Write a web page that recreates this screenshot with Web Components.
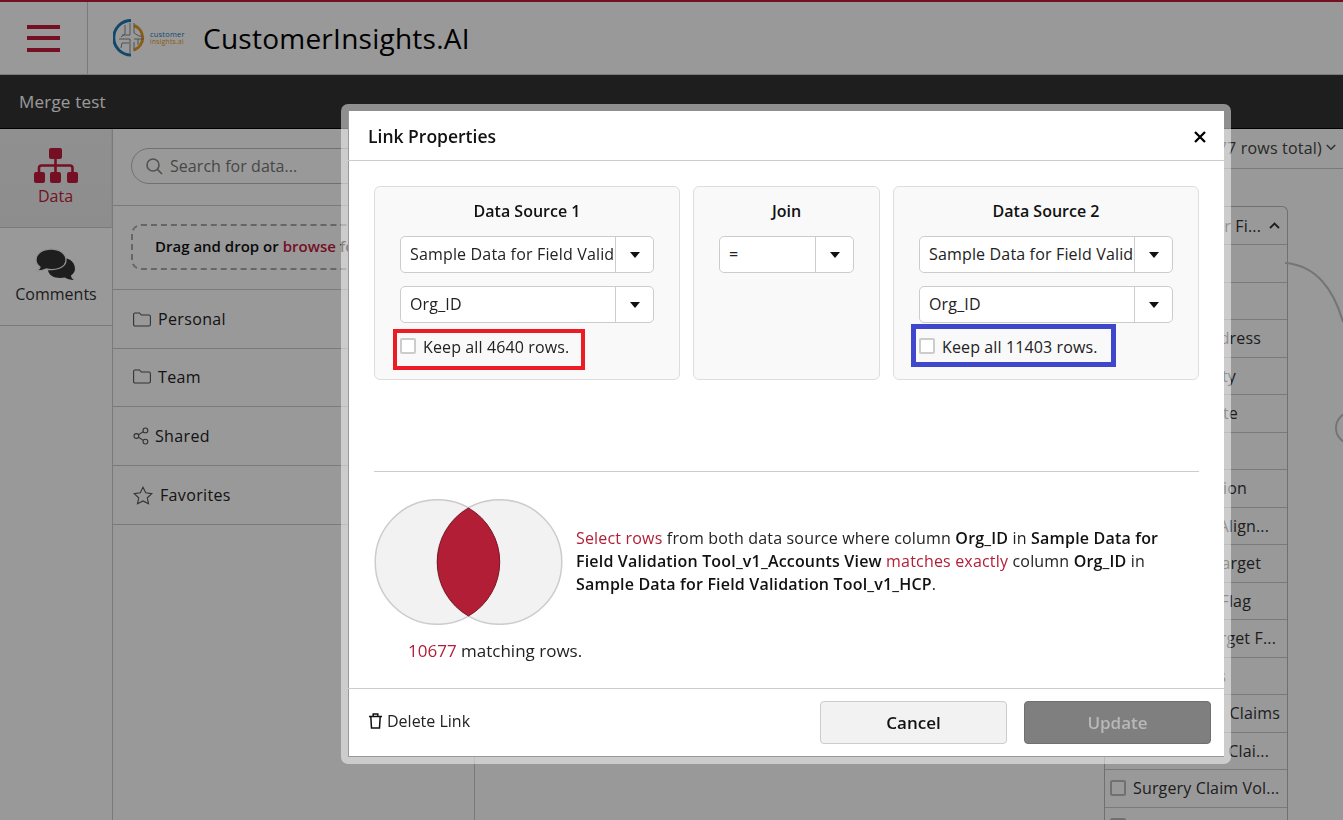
<!DOCTYPE html>
<html>
<head>
<meta charset="utf-8">
<title>Link Properties</title>
<style>
  html, body { margin:0; height:100%; overflow:hidden; }
  body { font-family:"Open Sans", sans-serif; color:#000; background:#fff; }
  .shell { height:820px; display:flex; flex-direction:column; }
  .work { flex:1; display:flex; min-height:0; }
  b { font-weight:600; }
</style>
</head>
<body>
<div class="shell">
  <app-header>CustomerInsights.AI</app-header>
  <title-bar>Merge test</title-bar>
  <div class="work">
    <side-rail></side-rail>
    <data-panel></data-panel>
    <link-canvas></link-canvas>
  </div>
</div>
<link-dialog></link-dialog>

<script>
const RED = '#c41a3c';

class AppHeader extends HTMLElement {
  constructor() {
    super();
    this.attachShadow({ mode: 'open' });
    this.shadowRoot.innerHTML = `
      <style>
        :host { display:flex; height:75px; box-sizing:border-box; border-top:2px solid ${RED}; border-bottom:1px solid #ccc; background:#fff; align-items:stretch; }
        .burger { width:88px; box-sizing:border-box; border-right:1px solid #ccc; display:flex; flex-direction:column; justify-content:center; gap:7.5px; padding:0 27px; }
        .burger i { display:block; height:4px; background:${RED}; }
        .brand { display:flex; align-items:center; padding-left:25px; gap:16px; }
        h1 { margin:0; font-size:28px; font-weight:500; letter-spacing:.25px; color:#000; }
        svg { display:block; }
      </style>
      <div class="burger"><i></i><i></i><i></i></div>
      <div class="brand">
        <svg width="74" height="40" viewBox="0 0 74 40">
          <path d="M18 2.500A17 17 0 0 0 18 37" fill="none" stroke="#1f78b4" stroke-width="3"/>
          <path d="M21 7.500A13 13 0 0 1 21 32" fill="none" stroke="#e89a1e" stroke-width="3"/>
          <g fill="none" stroke="#888" stroke-width="1">
            <path d="M12 7V16L8 19M17 5V17H9M17 21H6M16 25H9L8 30M17 21V35"/>
            <path d="M21 5V15L26 18H30M21 24V33M21 21H31M25 21V27"/>
          </g>
          <text x="37" y="18.500" font-family="Open Sans" font-size="7.400" fill="#1f78b4" letter-spacing=".25">customer</text>
          <text x="37" y="25.500" font-family="Open Sans" font-size="6.800" fill="#e89a1e" letter-spacing=".2">insights.ai</text>
        </svg>
        <h1><slot></slot></h1>
      </div>`;
  }
}
customElements.define('app-header', AppHeader);

class TitleBar extends HTMLElement {
  constructor() {
    super();
    this.attachShadow({ mode: 'open' });
    this.shadowRoot.innerHTML = `
      <style>
        :host { display:flex; align-items:center; height:54px; box-sizing:border-box; background:#333; border-bottom:1px solid #000; padding-left:19px; color:#fff; font-size:17px; letter-spacing:.2px; }
      </style>
      <slot></slot>`;
  }
}
customElements.define('title-bar', TitleBar);

class SideRail extends HTMLElement {
  constructor() {
    super();
    this.attachShadow({ mode: 'open' });
    this.shadowRoot.innerHTML = `
      <style>
        :host { display:block; width:113px; box-sizing:border-box; border-right:1px solid #ccc; background:#fff; flex:none; }
        .tab { height:98px; box-sizing:border-box; border-bottom:1px solid #ccc; display:flex; flex-direction:column; align-items:center; font-size:16px; color:#333; padding-top:19px; }
        .tab.on { height:99px; background:linear-gradient(#f0f0f0,#ececec); color:${RED}; border-right:1px solid #e4e4e4; }
        svg { display:block; }
        span { line-height:22px; }
      </style>
      <div class="tab on">
        <svg width="46" height="36" viewBox="0 0 46 36">
          <g fill="${RED}">
            <rect x="16" y="0" width="13" height="11" rx="2"/>
            <rect x="1" y="24" width="11" height="11" rx="2"/>
            <rect x="17" y="24" width="11" height="11" rx="2"/>
            <rect x="34" y="24" width="11" height="11" rx="2"/>
          </g>
          <path d="M22.500 11V24M6 24V20Q6 17.500 8.500 17.500H37Q39.500 17.500 39.500 20V24" fill="none" stroke="${RED}" stroke-width="2.600"/>
        </svg>
        <span style="margin-top:1px">Data</span>
      </div>
      <div class="tab" style="padding-top:20px">
        <svg width="42" height="33" viewBox="0 0 42 33">
          <path d="M16 10C27 8 40 10 40 21C40 24 38 26 36 27.500C36 29 37 31 39 32C35 32 32 31 30 29.500C22 31 14 29 13 22Z" fill="#333"/>
          <path d="M16 1C8 1 1 5 1 12C1 15 3 17.500 5 19C5 20.500 3 22 1 23C5 23 8 22.500 11 21C20 23 31 20 31 12C31 5 24 1 16 1Z" fill="#333" stroke="#f4f4f4" stroke-width="1.300"/>
        </svg>
        <span style="margin-top:2px">Comments</span>
      </div>`;
  }
}
customElements.define('side-rail', SideRail);

class PanelRow extends HTMLElement {
  constructor() {
    super();
    this.attachShadow({ mode: 'open' });
    this.shadowRoot.innerHTML = `
      <style>
        :host { display:flex; align-items:center; height:59px; box-sizing:border-box; border-bottom:1px solid #ccc; padding-left:20px; font-size:16px; font-weight:500; letter-spacing:.35px; color:#222; }
        ::slotted(svg) { display:block; margin-right:var(--gap, 7px); fill:none; stroke:#555; stroke-width:1.100; }
      </style>
      <slot></slot>`;
  }
}
customElements.define('panel-row', PanelRow);

class DataPanel extends HTMLElement {
  constructor() {
    super();
    this.attachShadow({ mode: 'open' });
    this.shadowRoot.innerHTML = `
      <style>
        :host { display:block; width:362px; box-sizing:border-box; border-right:1px solid #ccc; background:#fff; flex:none; }
        .search { height:77px; box-sizing:border-box; border-bottom:1px solid #ccc; padding:19px 0 0 18px; }
        .pill { height:36px; width:320px; box-sizing:border-box; border:1px solid #bbb; border-radius:18px; display:flex; align-items:center; gap:7px; padding-left:14px; font-size:16px; color:#777; letter-spacing:.05px; }
        .drop-row { height:84px; box-sizing:border-box; border-bottom:1px solid #ccc; padding:18px 0 0 18px; }
        .drop { height:46px; width:320px; box-sizing:border-box; border:2px dashed #aaa; border-radius:10px; display:flex; align-items:center; padding:0 0 2px 22px; font-size:15px; font-weight:600; white-space:nowrap; color:#111; overflow:hidden; }
        .drop em { font-style:normal; color:${RED}; margin:0 4px; }
        svg { display:block; }
      </style>
      <div class="search">
        <div class="pill">
          <svg width="17" height="17" viewBox="0 0 17 17" fill="none" stroke="#888" stroke-width="1.600"><circle cx="7" cy="7" r="6"/><path d="M11.400 11.400L16 16"/></svg>
          <span>Search for data...</span>
        </div>
      </div>
      <div class="drop-row"><div class="drop">Drag and drop or<em>browse</em>for data</div></div>
      <panel-row>
        <svg width="18" height="15" viewBox="0 0 18 15" style="--gap:7px"><path d="M.6 2.500Q.6 1 2 1H6.500L8.300 3H16Q17.400 3 17.400 4.500V12.500Q17.400 14 16 14H2Q.6 14 .6 12.500Z"/></svg>Personal
      </panel-row>
      <panel-row style="height:58px;padding-bottom:2px">
        <svg width="18" height="15" viewBox="0 0 18 15" style="--gap:7px"><path d="M.6 2.500Q.6 1 2 1H6.500L8.300 3H16Q17.400 3 17.400 4.500V12.500Q17.400 14 16 14H2Q.6 14 .6 12.500Z"/></svg>Team
      </panel-row>
      <panel-row>
        <svg width="16" height="18" viewBox="0 0 16 18" style="--gap:6px"><circle cx="3.400" cy="9" r="2.400"/><circle cx="12.400" cy="3.400" r="2.400"/><circle cx="12.400" cy="14.600" r="2.400"/><path d="M5.400 7.800L10.400 4.600M5.400 10.200L10.400 13.400"/></svg>Shared
      </panel-row>
      <panel-row>
        <svg width="20" height="19" viewBox="0 0 20 19" style="--gap:7px"><path d="M10 1.200L12.700 6.800L18.800 7.600L14.300 11.800L15.500 17.800L10 14.900L4.500 17.800L5.700 11.800L1.200 7.600L7.300 6.800Z"/></svg>Favorites
      </panel-row>`;
  }
}
customElements.define('data-panel', DataPanel);

class FieldRow extends HTMLElement {
  constructor() {
    super();
    this.attachShadow({ mode: 'open' });
    this.shadowRoot.innerHTML = `
      <style>
        :host { display:flex; align-items:center; justify-content:flex-end; height:37.5px; box-sizing:border-box; border-bottom:1px solid #ccc; font-size:16px; letter-spacing:.15px; color:#333; white-space:nowrap; padding-right:var(--end, 8px); }
        :host([boxed]) { justify-content:flex-start; padding:0 0 0 5px; gap:7px; }
        i { display:none; width:16px; height:16px; box-sizing:border-box; border:2px solid #bbb; border-radius:2px; background:#fff; flex:none; }
        :host([boxed]) i { display:block; }
      </style>
      <i></i><slot></slot>`;
  }
}
customElements.define('field-row', FieldRow);

class LinkCanvas extends HTMLElement {
  constructor() {
    super();
    this.attachShadow({ mode: 'open' });
    this.shadowRoot.innerHTML = `
      <style>
        :host { display:block; flex:1; position:relative; background:#fff; overflow:hidden; }
        .top { height:40px; box-sizing:border-box; border-bottom:1px solid #ccc; display:flex; align-items:center; justify-content:flex-end; gap:4px; padding:0 7px 2px 0; font-size:16px; letter-spacing:.2px; color:#444; }
        .table { position:absolute; left:629px; top:77px; width:184px; box-sizing:border-box; border:1px solid #bbb; border-bottom:0; border-radius:6px 6px 0 0; background:#fff; }
        .head { height:38px; box-sizing:border-box; border-bottom:1px solid #ccc; display:flex; align-items:center; justify-content:flex-end; gap:8px; padding-right:7px; font-size:16px; letter-spacing:.15px; color:#333; white-space:nowrap; }
        svg.lines { position:absolute; left:0; top:0; }
      </style>
      <div class="top">
        <span>77 rows total)</span>
        <svg width="10" height="7" viewBox="0 0 10 7" fill="none" stroke="#555" stroke-width="1.600"><path d="M.8 1L5 5.200L9.200 1"/></svg>
      </div>
      <div class="table">
        <div class="head">
          <span>for Fi...</span>
          <svg width="11" height="7" viewBox="0 0 11 7" fill="none" stroke="#333" stroke-width="1.800"><path d="M1 6L5.500 1.500L10 6"/></svg>
        </div>
        <field-row></field-row>
        <field-row></field-row>
        <field-row style="--end:26px">Address</field-row>
        <field-row style="--end:51px">City</field-row>
        <field-row style="--end:49px">State</field-row>
        <field-row></field-row>
        <field-row style="--end:40px">Region</field-row>
        <field-row style="--end:18px">Align...</field-row>
        <field-row style="--end:26px">Target</field-row>
        <field-row style="--end:36px">Flag</field-row>
        <field-row style="--end:11px">Target F...</field-row>
        <field-row style="--end:61px">s</field-row>
        <field-row style="--end:7px">Claims</field-row>
        <field-row style="--end:18px">Clai...</field-row>
        <field-row boxed>Surgery Claim Vol...</field-row>
        <field-row boxed>Surgery Claim Vol...</field-row>
      </div>
      <svg class="lines" width="868" height="691" viewBox="475 129 868 691" fill="none" stroke="#c4c4c4" stroke-width="2">
        <path d="M1285 263C1316 265 1334 290 1343 322"/>
        <circle cx="1352" cy="428" r="16"/>
      </svg>`;
  }
}
customElements.define('link-canvas', LinkCanvas);

class SelectBox extends HTMLElement {
  constructor() {
    super();
    this.attachShadow({ mode: 'open' });
    this.shadowRoot.innerHTML = `
      <style>
        :host { display:flex; height:37px; box-sizing:border-box; border:1px solid #ccc; border-radius:5px; background:#fff; font-size:16px; letter-spacing:.16px; color:#222; }
        .val { flex:1; min-width:0; box-sizing:border-box; padding:0 1px 0 9px; border-right:1px solid #ccc; }
        .val div { overflow:hidden; white-space:nowrap; line-height:35px; }
        .arrow { width:37px; flex:none; display:flex; align-items:center; justify-content:center; }
        .arrow i { width:0; height:0; border:5.500px solid transparent; border-top:6px solid #111; border-bottom:0; }
      </style>
      <div class="val"><div><slot></slot></div></div>
      <div class="arrow"><i></i></div>`;
  }
}
customElements.define('select-box', SelectBox);

class KeepCheck extends HTMLElement {
  constructor() {
    super();
    this.attachShadow({ mode: 'open' });
    this.shadowRoot.innerHTML = `
      <style>
        :host { display:flex; align-items:center; gap:7px; height:16px; margin-top:2px; position:relative; font-size:16px; letter-spacing:.12px; color:#222; white-space:nowrap; }
        i { width:16px; height:16px; box-sizing:border-box; border:2px solid #ccc; border-radius:2px; background:#fff; flex:none; }
        span { position:relative; top:1px; }
        .ring { position:absolute; box-sizing:border-box; border:var(--b, 5px) solid var(--ring); left:var(--l); top:var(--t); width:var(--w); height:var(--h); }
      </style>
      <i></i><span><slot></slot></span><div class="ring"></div>`;
  }
}
customElements.define('keep-check', KeepCheck);

class SourceCard extends HTMLElement {
  constructor() {
    super();
    this.attachShadow({ mode: 'open' });
    this.shadowRoot.innerHTML = `
      <style>
        :host { display:flex; flex-direction:column; height:194px; box-sizing:border-box; border:1px solid #ddd; border-radius:6px; background:#f9f9f9; padding:0 25px; }
        h3 { margin:0; height:49px; line-height:49px; text-align:center; font-size:16px; font-weight:600; color:#111; }
        .body { display:flex; flex-direction:column; gap:13px; }
      </style>
      <h3></h3>
      <div class="body"><slot></slot></div>`;
    this.shadowRoot.querySelector('h3').textContent = this.getAttribute('label');
  }
}
customElements.define('source-card', SourceCard);

class VennDiagram extends HTMLElement {
  constructor() {
    super();
    this.attachShadow({ mode: 'open' });
    this.shadowRoot.innerHTML = `
      <style>
        :host { display:block; width:189px; height:126px; flex:none; }
        svg { display:block; }
      </style>
      <svg width="189" height="126" viewBox="0 0 189 126">
        <g fill="#f2f2f2" stroke="#ccc" stroke-width="1.500">
          <circle cx="63.500" cy="63" r="62.300"/>
          <circle cx="125.500" cy="63" r="62.300"/>
        </g>
        <path d="M94.500 9A62.300 62.300 0 0 1 94.500 117A62.300 62.300 0 0 1 94.500 9Z" fill="#b21e35" stroke="#7c1526" stroke-width="1"/>
      </svg>`;
  }
}
customElements.define('venn-diagram', VennDiagram);

class DlgButton extends HTMLElement {
  constructor() {
    super();
    this.attachShadow({ mode: 'open' });
    this.shadowRoot.innerHTML = `
      <style>
        :host { display:flex; align-items:center; justify-content:center; width:187px; height:43px; box-sizing:border-box; border:1px solid #ccc; border-radius:4px; background:#f2f2f2; color:#111; font-size:17px; font-weight:600; }
        :host([disabled]) { background:#7f7f7f; border-color:#707070; color:#b8b8b8; }
      </style>
      <slot></slot>`;
  }
}
customElements.define('dlg-button', DlgButton);

class LinkDialog extends HTMLElement {
  constructor() {
    super();
    this.attachShadow({ mode: 'open' });
    this.shadowRoot.innerHTML = `
      <style>
        :host { position:fixed; inset:0; background:rgba(0,0,0,.4); display:block; }
        .frame { position:absolute; left:341px; top:104px; width:890px; height:660px; box-sizing:border-box; border:7px solid rgba(255,255,255,.5); border-radius:7px; background:#fff; background-clip:padding-box; display:flex; flex-direction:column; }
        .inner { flex:1; display:flex; flex-direction:column; min-height:0; box-shadow:inset 1px -1px 0 #999; }
        header { height:50px; box-sizing:border-box; border-bottom:1px solid #ccc; display:flex; align-items:center; justify-content:space-between; padding:0 18px 0 20px; font-size:17.500px; font-weight:600; color:#111; }
        .close { display:block; position:relative; top:1px; }
        main { flex:1; padding:25px 25px 0 26px; display:flex; flex-direction:column; min-height:0; }
        .cards { display:grid; grid-template-columns:306px 187px 306px; gap:13px; }
        hr { border:0; border-top:1px solid #ccc; margin:91px 0 0; }
        .venn-row { display:flex; align-items:center; gap:13px; margin-top:27px; }
        p { margin:0; font-size:16px; letter-spacing:.18px; line-height:23px; color:#222; max-width:590px; position:relative; top:-1px; }
        p b { font-weight:600; color:#111; }
        p em, .count em { font-style:normal; font-weight:500; color:#b21e35; }
        .count { margin:14px 0 0 34px; font-size:17px; line-height:24px; color:#222; font-weight:500; }
        footer { height:69px; box-sizing:border-box; border-top:1px solid #ccc; display:flex; align-items:flex-start; justify-content:space-between; padding:12px 13px 0 20px; }
        .del { display:flex; align-items:center; gap:4px; font-size:16px; color:#222; height:39px; }
        .btns { display:flex; gap:17px; }
        svg { display:block; }
      </style>
      <div class="frame"><div class="inner">
        <header>
          <span>Link Properties</span>
          <svg class="close" width="12" height="12" viewBox="0 0 12 12" stroke="#000" stroke-width="2.300"><path d="M1 1L11 11M11 1L1 11"/></svg>
        </header>
        <main>
          <div class="cards">
            <source-card label="Data Source 1">
              <select-box>Sample Data for Field Valid</select-box>
              <select-box>Org_ID</select-box>
              <keep-check style="--ring:#ed1c24;--b:4.500px;--l:-7px;--t:-9px;--w:192px;--h:41px">Keep all 4640 rows.</keep-check>
            </source-card>
            <source-card label="Join">
              <select-box>=</select-box>
            </source-card>
            <source-card label="Data Source 2">
              <select-box>Sample Data for Field Valid</select-box>
              <select-box>Org_ID</select-box>
              <keep-check style="--ring:#3f48cc;--l:-8px;--t:-14px;--w:205px;--h:43px">Keep all 11403 rows.</keep-check>
            </source-card>
          </div>
          <hr>
          <div class="venn-row">
            <venn-diagram></venn-diagram>
            <p><em>Select rows</em> from both data source where column <b>Org_ID</b> in <b>Sample Data for Field Validation Tool_v1_Accounts View</b> <em>matches exactly</em> column <b>Org_ID</b> in <b>Sample Data for Field Validation Tool_v1_HCP</b>.</p>
          </div>
          <div class="count"><em>10677</em> matching rows.</div>
        </main>
        <footer>
          <div class="del">
            <svg width="15" height="16" viewBox="0 0 15 16" fill="none" stroke="#111" stroke-width="1.500"><path d="M1 3.500H14M2.800 3.500L3.500 15H11.500L12.200 3.500M5.200 3.500V1H9.800V3.500"/></svg>
            <span>Delete Link</span>
          </div>
          <div class="btns">
            <dlg-button>Cancel</dlg-button>
            <dlg-button disabled>Update</dlg-button>
          </div>
        </footer>
      </div></div>`;
  }
}
customElements.define('link-dialog', LinkDialog);
</script>
</body>
</html>
